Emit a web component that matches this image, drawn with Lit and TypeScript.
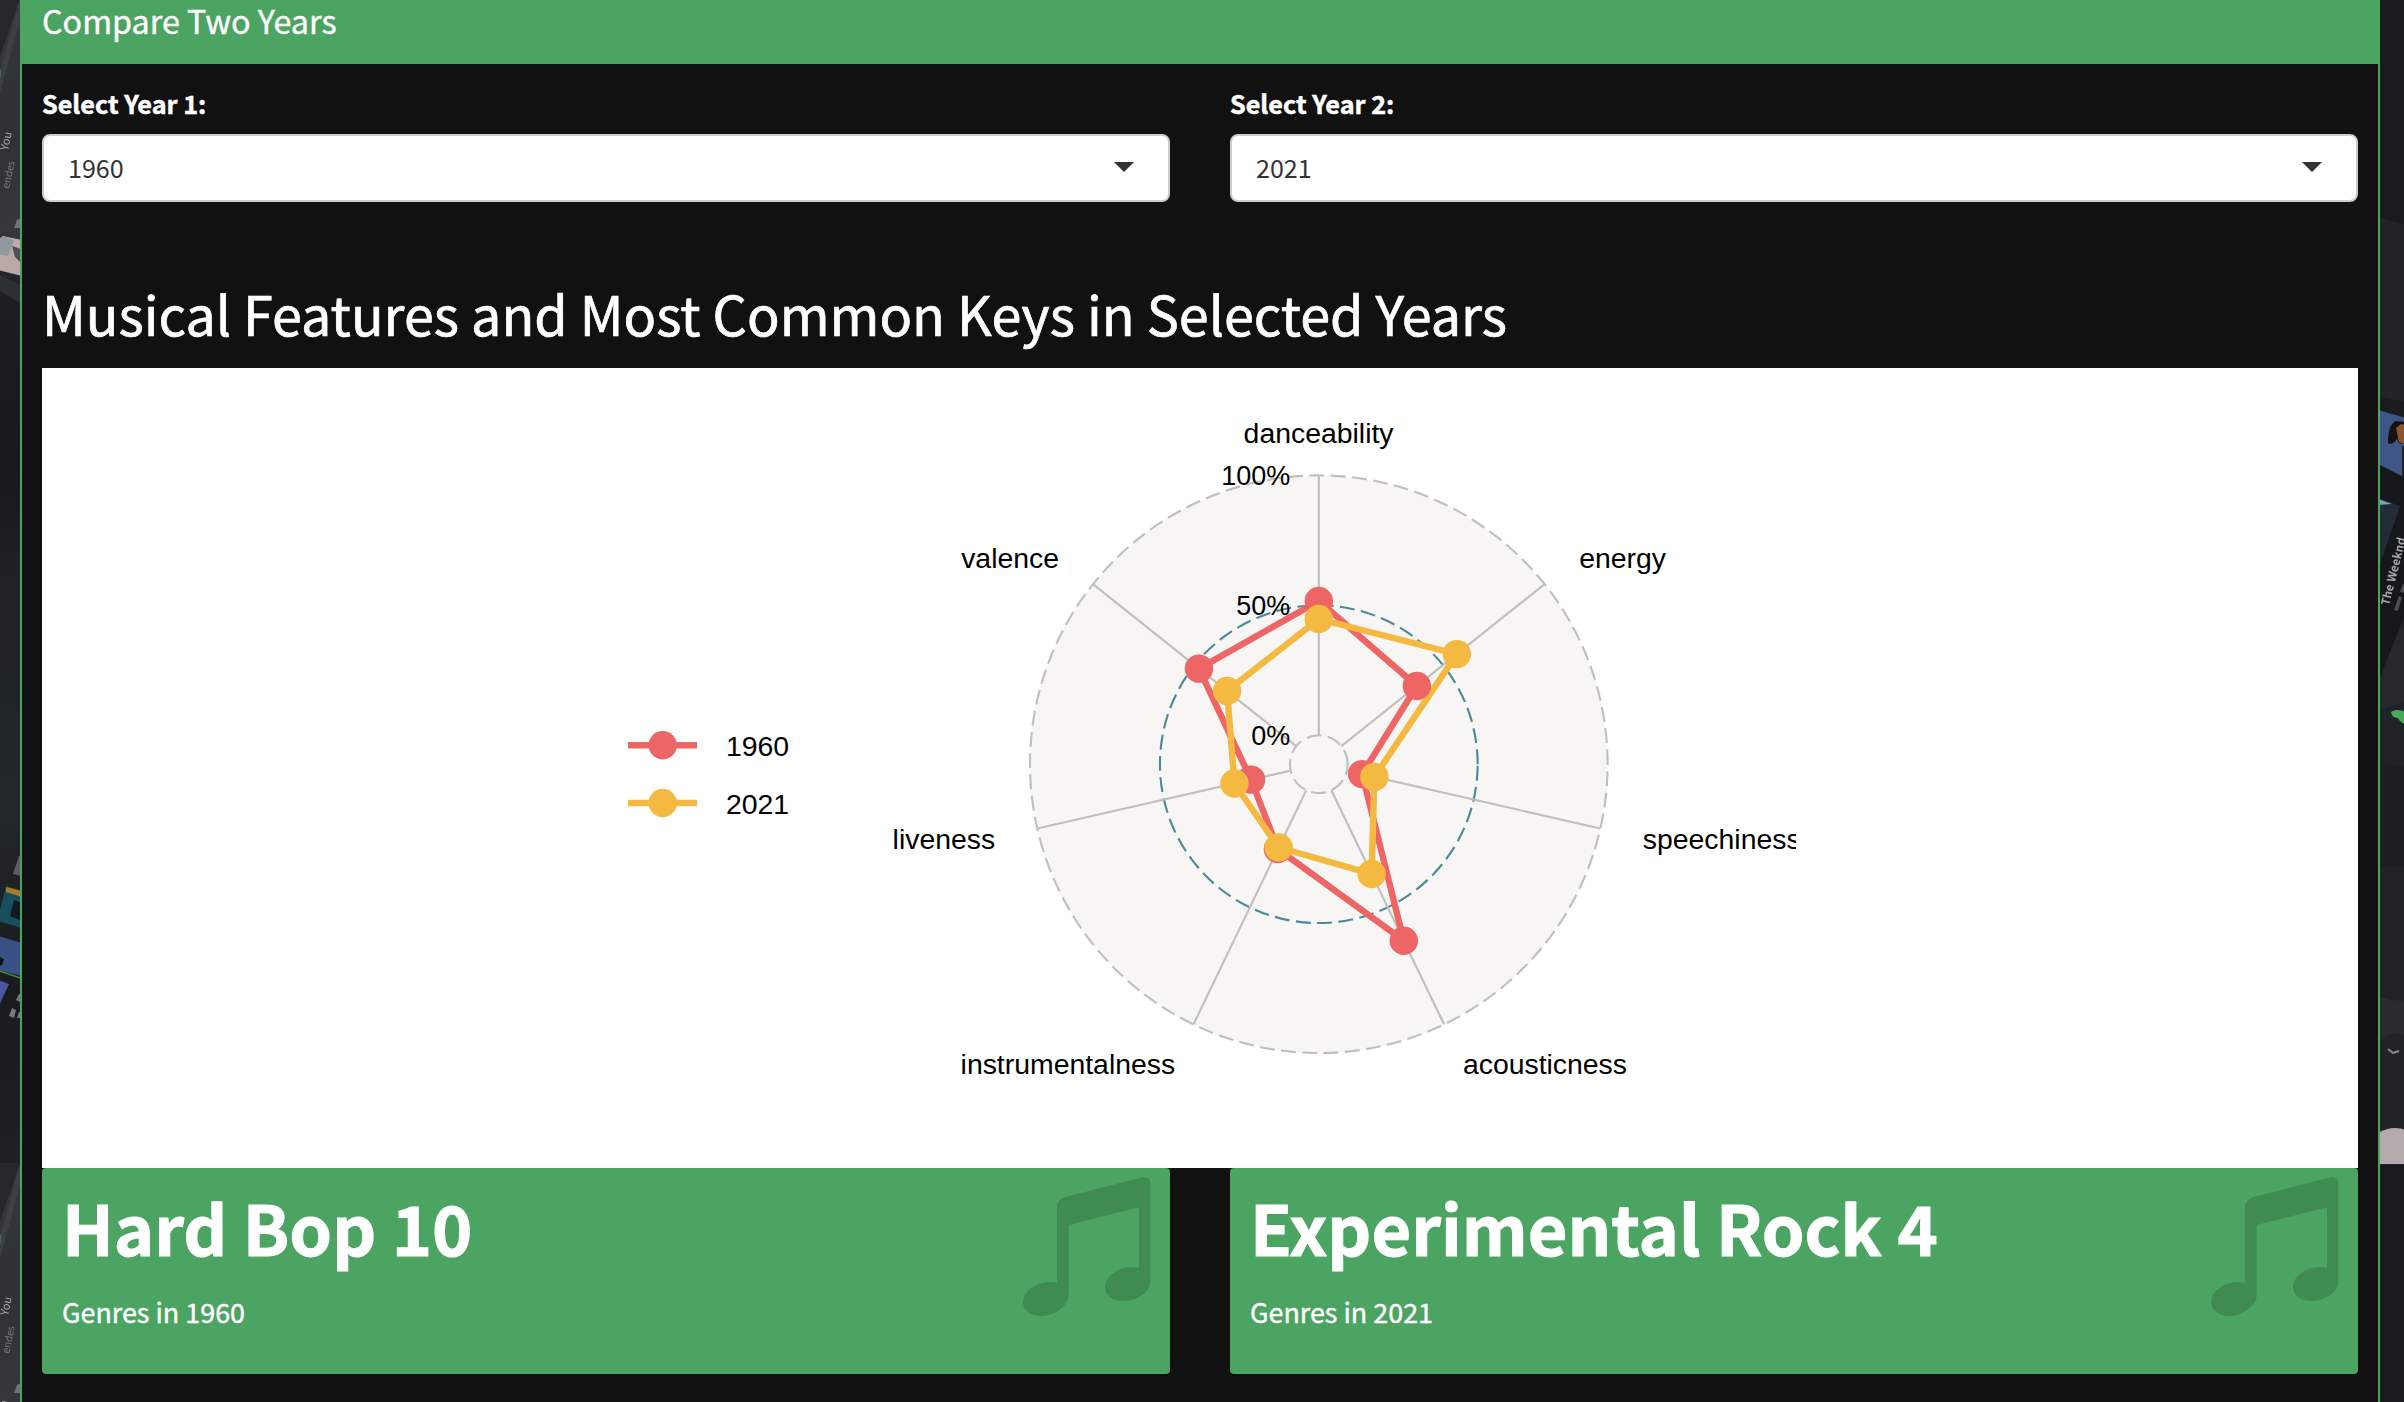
import { LitElement, html, svg, css } from "lit";
import { customElement, property } from "lit/decorators.js";

const CX = 1276.8;
const CY = 396.2;
const R_OUT = 288.8;
const R_MID = 158.85;
const R_IN = 28.9;

const polar = (r: number, i: number): [number, number] => {
  const a = (i * 2 * Math.PI) / 7;
  return [CX + r * Math.sin(a), CY - r * Math.cos(a)];
};

const SERIES = [
  { name: "1960", cls: "s1", radii: [163.2, 125.4, 44.4, 195.9, 94.2, 69.5, 153.3], y: 377.3, ty: 388 },
  { name: "2021", cls: "s2", radii: [145.2, 176.6, 57, 121.8, 92.5, 86.5, 117.3], y: 435, ty: 446 },
];

const LABELS: [string, number, number, string][] = [
  ["danceability", 1276.6, 75, "middle"],
  ["energy", 1537.2, 200.3, "start"],
  ["speechiness", 1600.8, 481.3, "start"],
  ["acousticness", 1420.9, 706, "start"],
  ["instrumentalness", 1133.2, 706, "end"],
  ["liveness", 953.2, 481.3, "end"],
  ["valence", 1017, 200.3, "end"],
];

const TICKS: [string, number][] = [
  ["100%", 116.7],
  ["50%", 246.7],
  ["0%", 376.7],
];

const ring = (r: number) =>
  `M${CX + r} ${CY}A${r} ${r} 0 0 0 ${CX - r} ${CY}A${r} ${r} 0 0 0 ${CX + r} ${CY}`;

@customElement("radar-chart")
class RadarChart extends LitElement {
  static styles = css`
    :host { display: block; height: 800px; background: #fff; }
    svg { display: block; }
    text { font-family: "Liberation Sans", Arial, sans-serif; font-size: 28.4px; fill: #000; }
    .tick { font-size: 27px; text-anchor: end; }
    .disc { fill: #f7f6f5; }
    .axis { stroke: #bfbfbf; stroke-width: 2.13; }
    .ring { fill: none; stroke: #bfbfbf; stroke-width: 2.13; stroke-dasharray: 14.93 6.4; }
    .mid { stroke: #4a8c96; }
    .line { fill: none; stroke-width: 6.4; stroke-linejoin: round; }
    .line.s1 { stroke: #ed6665; }
    .line.s2 { stroke: #f4b940; }
    .dot.s1 { fill: #ed6665; }
    .dot.s2 { fill: #f4b940; }
  `;
  render() {
    return html`<svg width="2316" height="800" viewBox="0 0 2316 800">
      <defs><clipPath id="plot"><rect x="562" y="0" width="1192" height="800" /></clipPath></defs>
      <g clip-path="url(#plot)">
        <circle class="disc" cx=${CX} cy=${CY} r=${R_OUT} />
        <path class="ring" d=${ring(R_IN)} />
        <path class="ring mid" d=${ring(R_MID)} />
        <path class="ring" d=${ring(R_OUT)} />
        ${LABELS.map((_, i) => {
          const [x1, y1] = polar(R_IN, i);
          const [x2, y2] = polar(R_OUT, i);
          return svg`<line class="axis" x1=${x1} y1=${y1} x2=${x2} y2=${y2} />`;
        })}
        ${SERIES.map(
          (s) => svg`<polygon class="line ${s.cls}" points=${s.radii.map((r, i) => polar(r, i).join(",")).join(" ")} />`
        )}
        ${SERIES.map((s) =>
          s.radii.map((r, i) => {
            const [x, y] = polar(r, i);
            return svg`<circle class="dot ${s.cls}" cx=${x} cy=${y} r="14.2" />`;
          })
        )}
        ${TICKS.map(([t, y]) => svg`<text class="tick" x="1248.2" y=${y}>${t}</text>`)}
        ${LABELS.map(([t, x, y, a]) => svg`<text x=${x} y=${y} text-anchor=${a}>${t}</text>`)}
        ${SERIES.map(
          (s) => svg`<line class="line ${s.cls}" x1="586" x2="655" y1=${s.y} y2=${s.y} />
            <circle class="dot ${s.cls}" cx="620.7" cy=${s.y} r="14.2" />
            <text x="684" y=${s.ty}>${s.name}</text>`
        )}
      </g>
    </svg>`;
  }
}

@customElement("year-select")
class YearSelect extends LitElement {
  @property() label = "";
  @property() value = "";
  static styles = css`
    :host { display: block; flex: 1; }
    .label {
      font-size: 25.2px; line-height: 40px; font-weight: 700; margin-bottom: 11px; color: #fff;
      -webkit-text-stroke: 0.5px #fff;
    }
    .field {
      display: flex; align-items: center; justify-content: space-between; box-sizing: border-box;
      height: 68px; padding: 0 34px 2px 24px; border: 2px solid #ccc; border-radius: 8px;
      background: #fff; color: #333; font-size: 25.1px; line-height: 40px;
    }
    .caret { width: 0; height: 0; border: 10px solid transparent; border-top-color: #333; border-bottom: 0; }
  `;
  render() {
    return html`<div class="label">${this.label}</div>
      <div class="field"><span>${this.value}</span><span class="caret"></span></div>`;
  }
}

@customElement("value-box")
class ValueBox extends LitElement {
  @property() value = "";
  @property() caption = "";
  static styles = css`
    :host {
      display: flex; justify-content: space-between; flex: 1; box-sizing: border-box; height: 206px;
      padding: 21px 19px 0 20px; border-radius: 4px; background: #4ba461; color: #fff;
    }
    .value {
      font-size: 68.4px; line-height: 76px; font-weight: 700; white-space: nowrap;
      -webkit-text-stroke: 1px #fff;
    }
    .caption { font-size: 26.9px; line-height: 40px; margin-top: 27px; -webkit-text-stroke: 0.4px #fff; }
    .icon { width: 128px; height: 140px; margin-top: -12px; fill: rgba(0, 0, 0, 0.15); }
  `;
  render() {
    return html`<div>
        <div class="value">${this.value}</div>
        <div class="caption">${this.caption}</div>
      </div>
      <svg class="icon" viewBox="129 111 384 420">
        <path d="M231 200Q231 181 254 172L487 112Q511 109 511 131V425C511 455 470 483 430 483C397 483 375 467 375 442C375 408 414 382 452 381Q466 380 477 383V202L266 255V466C266 498 223 528 184 528C151 528 129 511 129 487C129 454 169 426 208 426Q221 425 231 429Z" />
      </svg>`;
  }
}

@customElement("app-root")
class AppRoot extends LitElement {
  static styles = css`
    :host {
      display: grid; grid-template-columns: 20px 2360px 24px; height: 1402px; overflow: hidden;
      background: #1a1b1f; font-family: "Noto Sans CJK JP", "Noto Sans CJK SC", sans-serif;
    }
    .side { display: block; }
    .side text { font-family: "Noto Sans CJK JP", sans-serif; fill: #a4a8ab; }
    .soft { filter: blur(0.7px); }
    .box { border: solid #4ba461; border-width: 0 2px; background: #111; box-sizing: border-box; }
    .head {
      box-sizing: border-box; height: 64px; padding-left: 20px; background: #4ba461; color: #fff;
      font-size: 32.3px; line-height: 40px; -webkit-text-stroke: 0.4px #fff;
    }
    .body { padding: 19px 20px 0; }
    .row { display: flex; gap: 60px; }
    .title {
      margin: 78px 0 22px; font-size: 53.9px; line-height: 66px; font-weight: 400; color: #fff;
      -webkit-text-stroke: 0.7px #fff;
    }
  `;

  leftArt() {
    return svg`
      <rect width="20" height="1164" fill="url(#lg)" />
      <g class="soft">
      <path d="M-2 78L20 0V20L-2 100Z" fill="#3c4044" />
      <path d="M20 -2L-2 62V-2Z" fill="#24282c" />
      <path d="M-2 62q4 8 2 18l-2 2z" fill="#3c8f4e" />
      <text transform="translate(8 151) rotate(-78)" font-size="11">You</text>
      <text transform="translate(9 189) rotate(-78)" font-size="10" opacity=".6">endes</text>
      <path d="M14 228l3-8 4-2v10z" fill="#6e7377" />
      <path d="M-2 240L3 236L22 240V276L-2 270Z" fill="#bba9a5" />
      <path d="M-2 240L3 236L14 240L8 256L-2 254Z" fill="#8f9aa0" />
      <path d="M12 246l9 3v14l-6-6z" fill="#4d5259" />
      <path d="M-2 274L22 286V304L-2 290Z" fill="#2c3034" />
      <path d="M13 874l6-18h3v20z" fill="#62585f" />
      <path d="M-2 918L6 886L22 891V928L-2 921Z" fill="#17505c" />
      <path d="M6 887l16 4v6l-16-5z" fill="#a97a24" />
      <path d="M14 900l8 3v18l-12-5z" fill="#101b20" />
      <path d="M-2 936L22 943V976L-2 970Z" fill="#3a5186" />
      <path d="M-2 956l6 3-2 6-4 1z" fill="#111" />
      <path d="M-2 970.5L22 978.5" stroke="#3c8f32" stroke-width="1.5" />
      <path d="M-2 980L9 984L-2 1008Z" fill="#4a55a0" />
      <path d="M9 1016l3-8 4 2-2 8zM16 1000l3-6 3 1v8zM17 1018l2-6h3v6z" fill="#75787c" />
      </g>`;
  }

  render() {
    return html`
      <svg class="side" width="20" height="1402">
        <defs>
          <linearGradient id="lg" x1="0" y1="0" x2="0" y2="1">
            <stop offset="0" stop-color="#34383c" /><stop offset=".1" stop-color="#2e3237" />
            <stop offset=".2" stop-color="#33373b" /><stop offset=".25" stop-color="#1d1f23" />
            <stop offset=".4" stop-color="#17181c" /><stop offset=".5" stop-color="#1e2226" />
            <stop offset=".7" stop-color="#22272a" /><stop offset=".85" stop-color="#1a1b1f" />
            <stop offset="1" stop-color="#1d2024" />
          </linearGradient>
        </defs>
        ${this.leftArt()}
        <g transform="translate(0 1165)">${this.leftArt()}</g>
      </svg>
      <main class="box">
        <div class="head">Compare Two Years</div>
        <div class="body">
          <div class="row">
            <year-select label="Select Year 1:" value="1960"></year-select>
            <year-select label="Select Year 2:" value="2021"></year-select>
          </div>
          <h2 class="title">Musical Features and Most Common Keys in Selected Years</h2>
          <radar-chart></radar-chart>
          <div class="row">
            <value-box value="Hard Bop 10" caption="Genres in 1960"></value-box>
            <value-box value="Experimental Rock 4" caption="Genres in 2021"></value-box>
          </div>
        </div>
      </main>
      <svg class="side" width="24" height="1402">
        <path d="M0 218L24 224V1165H0Z" fill="#202428" />
        <g class="soft">
        <path d="M-2 396L26 402V500H-2Z" fill="#1a1b1f" />
        <path d="M-2 410L26 418V478L-2 464Z" fill="#3d5687" />
        <path d="M8 443Q8 424 16 421L26 422V445L19 443L17 439Q12 446 8 443Z" fill="#15120f" />
        <path d="M16 428l5-4 5 1v20l-7-3z" fill="#8a5530" />
        <path d="M22 446h4v36l-4-2z" fill="#2b2019" />
        <path d="M-2 465L26 480V640L-2 680Z" fill="#16171a" />
        <path d="M-2 498L20 506L-2 570Z" fill="#222c38" />
        <path d="M-2 499l14 5-14 1z" fill="#7fa3b5" />
        <path d="M-2 682L26 612V700L-2 712Z" fill="#24282c" />
        <text transform="translate(9 606) rotate(-76)" font-size="11.5" font-weight="700">The Weeknd</text>
        <path d="M14 610l5-14 3 1-4 14zM20 592l3-8h3v9z" fill="#4b4e52" />
        <path d="M26 712q-10-4-15 0 1 6 7 6 2 5 8 6z" fill="#49a85a" />
        <path d="M-2 758q14 9 28 9v100H-2z" fill="#1c1f23" />
        <path d="M-2 996q14 6 28 4v36q-16-8-28 8z" fill="#282c30" />
        <path d="M8 1049l5 4 6-2" stroke="#8a8e92" stroke-width="2" fill="none" />
        <path d="M-2 1133q14-8 28-3V1162H-2Z" fill="#b5abac" />
        </g>
        <rect y="1132" width="24" height="32" fill="#b5abac" />
        <rect y="1165" width="24" height="237" fill="#1a1b1f" />
      </svg>`;
  }
}
